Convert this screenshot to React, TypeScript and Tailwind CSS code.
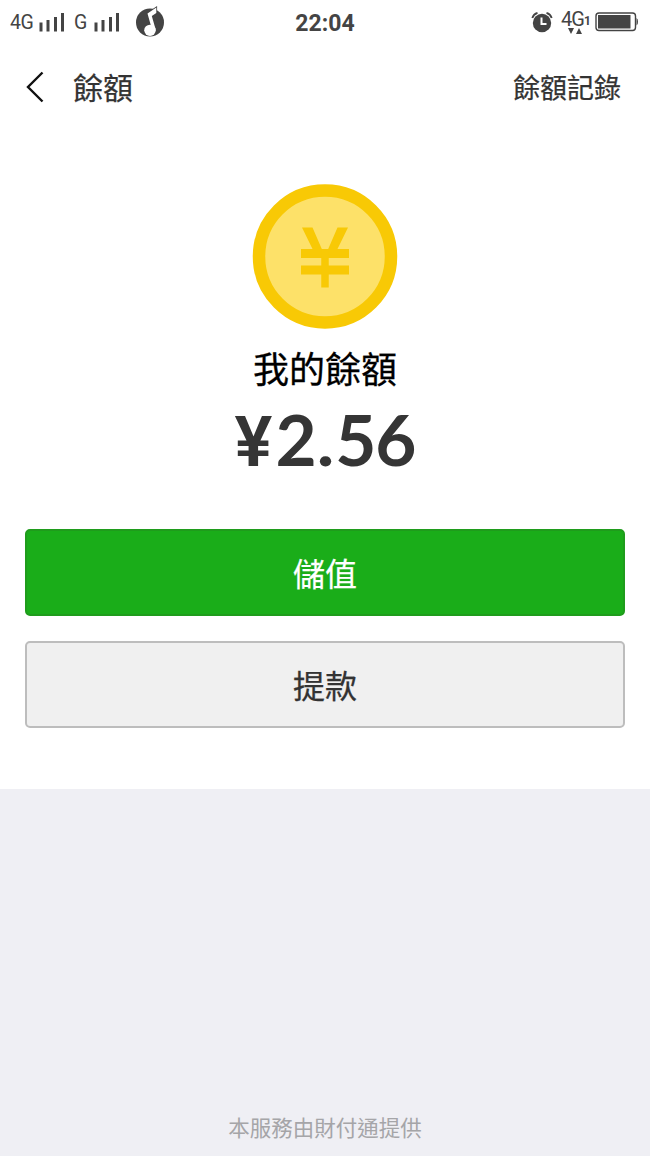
import React from 'react';

const CJK = "font-['Noto_Sans_CJK_TC',sans-serif]";

const SignalBars: React.FC = () => (
    <svg width="26" height="20" viewBox="0 0 26 20" fill="#444" className="shrink-0">
        <rect x="0.5" y="10.5" width="3" height="9" />
        <rect x="7.5" y="8" width="3" height="11.5" />
        <rect x="15" y="5" width="3" height="14.5" />
        <rect x="22" y="1" width="3" height="18.5" />
    </svg>
);

const MusicIcon: React.FC = () => (
    <svg width="30" height="32" viewBox="0 0 30 32" className="shrink-0">
        <circle cx="15" cy="16.5" r="14" fill="#444" />
        <path d="M12.5 7.5 L21.3 1.5 L21.3 7 L16.8 10 L20.8 24 L16 20 Z" fill="#fff" stroke="#444" strokeWidth="1.6" paintOrder="stroke" />
        <ellipse cx="15" cy="24.3" rx="5.8" ry="5.6" fill="#fff" />
    </svg>
);

const AlarmIcon: React.FC = () => (
    <svg width="22" height="22" viewBox="0 0 22 22" fill="none" className="shrink-0">
        <circle cx="11" cy="12" r="9.2" fill="#444" />
        <path d="M1.3 7 Q2.5 3 6.5 1.8 M20.7 7 Q19.5 3 15.5 1.8" stroke="#444" strokeWidth="1.8" />
        <path d="M10.5 6.5 V13 H15.5" stroke="#fff" strokeWidth="2" />
    </svg>
);

const BatteryIcon: React.FC = () => (
    <svg width="44" height="20" viewBox="0 0 44 20" className="shrink-0">
        <rect x="1" y="1" width="39.5" height="17.5" rx="3" fill="none" stroke="#444" strokeWidth="1.4" />
        <rect x="3" y="3" width="32.5" height="13.5" fill="#444" />
        <path d="M41.5 6 Q43 6.5 43 9.75 T41.5 13.5 Z" fill="#444" />
    </svg>
);

const StatusBar: React.FC = () => (
    <div className="grid h-11 grid-cols-3 items-center font-[Roboto,sans-serif] text-[#444]">
        <div className="flex items-center pl-2.5">
            <span className="w-[29px] pt-px text-[19.5px] tracking-tight">4G</span>
            <SignalBars />
            <span className="ml-[9px] w-5 pt-px text-[19.5px]">G</span>
            <SignalBars />
            <span className="ml-[15px]"><MusicIcon /></span>
        </div>
        <div className="pt-1 text-center text-[23px] font-bold">22:04</div>
        <div className="flex items-center justify-end pr-[11px]">
            <AlarmIcon />
            <div className="ml-2 flex w-[34px] flex-col">
                <div className="flex h-[18px] items-center">
                    <span className="text-[20px] tracking-tighter">4G</span>
                    <span className="mt-1 text-[12px] font-bold">1</span>
                </div>
                <svg width="16" height="6" viewBox="0 0 16 6" fill="#444" className="ml-[7px]">
                    <path d="M0 0 H6 L3 6 Z M8 6 H14 L11 0 Z" />
                </svg>
            </div>
            <BatteryIcon />
        </div>
    </div>
);

const Header: React.FC = () => (
    <header className="flex h-[86px] items-center justify-between pl-[25px] pr-[29px] text-[#333] [-webkit-text-stroke:0.25px]">
        <div className="flex items-center">
            <svg width="20" height="32" viewBox="0 0 20 32" fill="none" stroke="#111" strokeWidth="2.4">
                <path d="M17.5 1.5 L3 16 L17.5 30.5" />
            </svg>
            <h1 className="ml-7 pb-px text-[30px]">餘額</h1>
        </div>
        <span className="text-[27px]">餘額記錄</span>
    </header>
);

const Coin: React.FC = () => (
    <svg width="146" height="146" viewBox="0 0 146 146" fill="none">
        <circle cx="73" cy="73.5" r="66" fill="#fde169" stroke="#f8c905" strokeWidth="12.5" />
        <path d="M50 44.5 H60.5 L69.8 66 H76.2 L85.5 44.5 H96 L85 67 H61 Z" fill="#f8c905" />
        <path d="M49 70.5 H97 M49 87 H97" stroke="#f8c905" strokeWidth="9" />
        <path d="M73 66 V104.5" stroke="#f8c905" strokeWidth="7.5" />
    </svg>
);

const App: React.FC = () => (
    <div className={`flex h-[1156px] w-full flex-col bg-[#efeff4] ${CJK}`}>
        <main className="flex h-[789px] flex-col bg-white">
            <StatusBar />
            <Header />
            <section className="flex flex-col items-center pt-[53px]">
                <Coin />
                <p className="mt-[11px] text-[36px] leading-[54px] text-black [-webkit-text-stroke:0.3px]">我的餘額</p>
                <p className="mt-[9px] flex h-[72px] items-baseline font-[Lato,sans-serif] text-[71px] leading-[72px] font-bold tracking-[-1px] text-[#353535]">
                    <span className="mr-1 font-[Roboto,sans-serif] font-semibold">¥</span>
                    <span>2</span>
                    <span className="font-[Roboto,sans-serif]">.</span>
                    <span>56</span>
                </p>
            </section>
            <div className="mt-[54px] flex flex-col gap-[25px] px-[25px]">
                <button className="h-[87px] rounded-[5px] border-2 border-[#1f9c1c] bg-[#1aad19] pb-0.5 text-[32px] text-white [-webkit-text-stroke:0.25px]">儲值</button>
                <button className="h-[87px] rounded-[5px] border-2 border-[#bdbdbd] bg-[#f0f0f0] pb-0.5 text-[32px] text-[#333] [-webkit-text-stroke:0.25px]">提款</button>
            </div>
        </main>
        <footer className="mt-auto pb-[13px] text-center text-[21.5px] text-[#a5a5a8]">本服務由財付通提供</footer>
    </div>
);

export default App;
